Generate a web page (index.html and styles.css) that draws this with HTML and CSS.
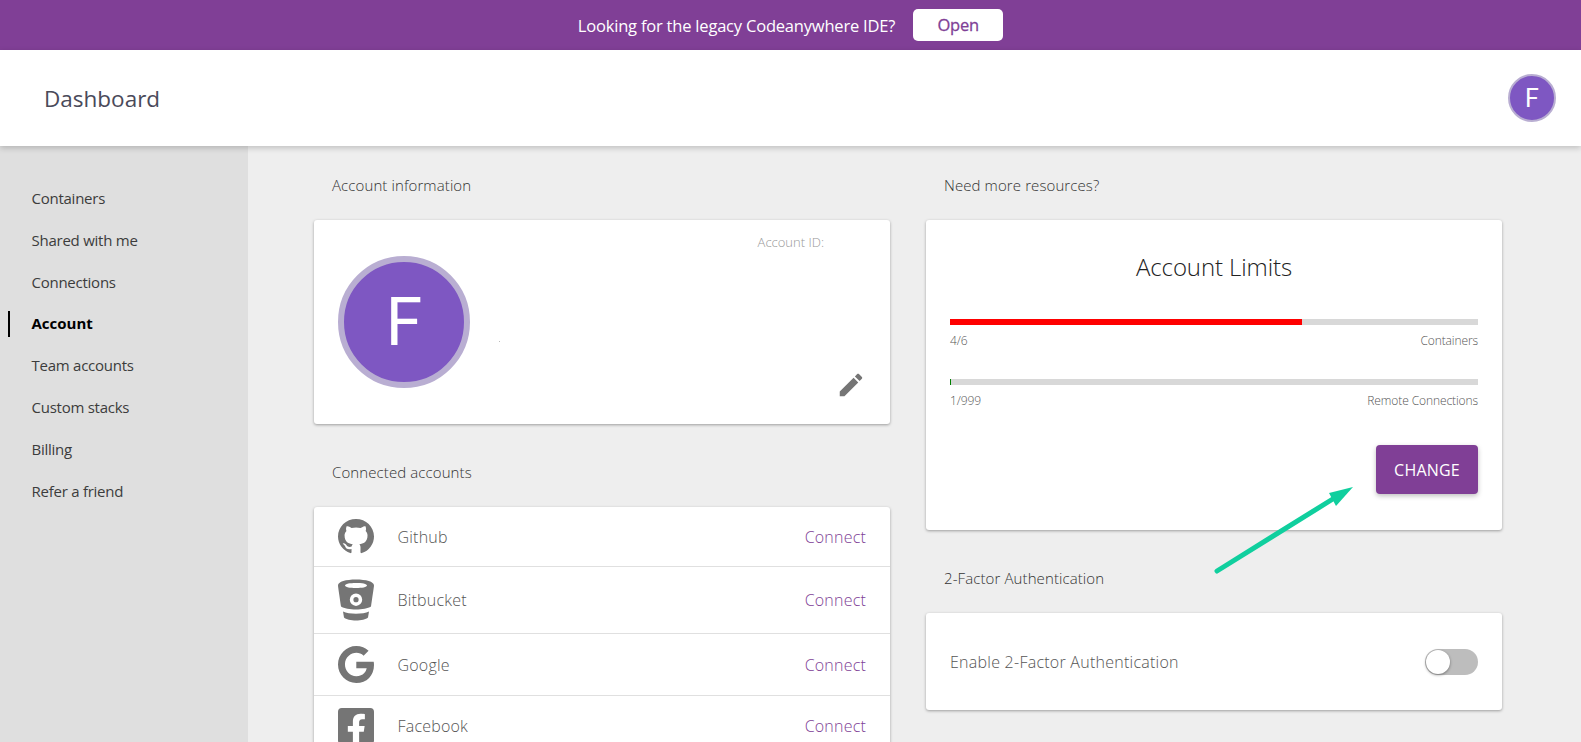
FILE: index.html
```html
<!DOCTYPE html>
<html lang="en">
<head>
<meta charset="UTF-8">
<meta name="viewport" content="width=device-width, initial-scale=1.0">
<title>Dashboard</title>
<link rel="stylesheet" href="styles.css">
</head>
<body>
<div class="banner">
  <span>Looking for the legacy Codeanywhere IDE?</span>
  <a class="banner-btn" href="#">Open</a>
</div>
<header class="topbar">
  <div class="page-title">Dashboard</div>
  <div class="avatar-small">F</div>
</header>
<div class="layout">
  <nav class="sidebar">
    <a href="#">Containers</a>
    <a href="#">Shared with me</a>
    <a href="#">Connections</a>
    <a href="#" class="active">Account</a>
    <a href="#">Team accounts</a>
    <a href="#">Custom stacks</a>
    <a href="#">Billing</a>
    <a href="#">Refer a friend</a>
  </nav>
  <main class="content">
    <div class="column">
      <section class="section">
        <h2 class="section-label">Account information</h2>
        <div class="card account-card">
          <div class="avatar-big">F</div>
          <div class="account-dot"></div>
          <div class="account-id">Account ID:</div>
          <svg class="edit-icon" viewBox="0 0 24 24"><path d="M3 17.25V21h3.75L17.81 9.94l-3.75-3.75L3 17.25zM20.71 7.04c.39-.39.39-1.02 0-1.41l-2.34-2.34c-.39-.39-1.02-.39-1.41 0l-1.83 1.83 3.75 3.75 1.83-1.83z"/></svg>
        </div>
      </section>
      <section class="section">
        <h2 class="section-label">Connected accounts</h2>
        <div class="card">
          <div class="conn-row">
            <svg class="conn-icon gh" viewBox="0 0 16 16" preserveAspectRatio="none"><path d="M8 0C3.58 0 0 3.58 0 8c0 3.54 2.29 6.53 5.47 7.59.4.07.55-.17.55-.38 0-.19-.01-.82-.01-1.49-2.01.37-2.53-.49-2.69-.94-.09-.23-.48-.94-.82-1.13-.28-.15-.68-.52-.01-.53.63-.01 1.08.58 1.23.82.72 1.21 1.87.87 2.33.66.07-.52.28-.87.51-1.07-1.78-.2-3.64-.89-3.64-3.95 0-.87.31-1.59.82-2.15-.08-.2-.36-1.02.08-2.12 0 0 .67-.21 2.2.82.64-.18 1.32-.27 2-.27.68 0 1.36.09 2 .27 1.53-1.04 2.2-.82 2.2-.82.44 1.1.16 1.92.08 2.12.51.56.82 1.27.82 2.15 0 3.07-1.87 3.75-3.65 3.95.29.25.54.73.54 1.48 0 1.07-.01 1.93-.01 2.2 0 .21.15.46.55.38A8.013 8.013 0 0016 8c0-4.42-3.58-8-8-8z"/></svg>
            <span class="conn-name">Github</span>
            <a class="conn-link" href="#">Connect</a>
          </div>
          <div class="conn-row">
            <svg class="conn-icon bb" viewBox="0 0 36 41"><path fill-rule="evenodd" d="M18 0C8 0 0 2 0 6c0 1 2 14 3 21 3 2 9 3 15 3s12-1 15-3c1-7 3-20 3-21 0-4-8-6-18-6zm0 3.5c6 0 11 .8 11 2.500S24 8.500 18 8.500 7 7.700 7 6s5-2.500 11-2.500zM18 14a6.200 6.200 0 1 0 0 12.400A6.200 6.200 0 0 0 18 14z"/><circle cx="18" cy="20.200" r="2.600"/><path d="M5 32c3 1.500 8 2.200 13 2.200s10-.7 13-2.200l-1 6c-2 2-7 3-12 3s-10-1-12-3z"/></svg>
            <span class="conn-name">Bitbucket</span>
            <a class="conn-link" href="#">Connect</a>
          </div>
          <div class="conn-row">
            <svg class="conn-icon gg" viewBox="0 8 488 496" preserveAspectRatio="none"><path d="M488 261.800C488 403.300 391.100 504 248 504 110.800 504 0 393.200 0 256S110.800 8 248 8c66.800 0 123 24.500 166.300 64.900l-67.500 64.900C258.500 52.600 94.300 116.600 94.300 256c0 86.500 69.100 156.600 153.700 156.600 98.200 0 135-70.400 140.800-106.900H248v-85.300h236.100c2.300 12.700 3.900 24.900 3.900 41.400z"/></svg>
            <span class="conn-name">Google</span>
            <a class="conn-link" href="#">Connect</a>
          </div>
          <div class="conn-row">
            <svg class="conn-icon fb" viewBox="0 32 448 448" preserveAspectRatio="none"><path d="M400 32H48A48 48 0 0 0 0 80v352a48 48 0 0 0 48 48h137.250V327.690h-63V256h63v-54.640c0-62.150 37-96.480 93.670-96.480 27.140 0 55.520 4.840 55.520 4.840v61h-31.270c-30.810 0-40.420 19.120-40.420 38.730V256h68.780l-11 71.690h-57.780V480H400a48 48 0 0 0 48-48V80a48 48 0 0 0-48-48z"/></svg>
            <span class="conn-name">Facebook</span>
            <a class="conn-link" href="#">Connect</a>
          </div>
        </div>
      </section>
    </div>
    <div class="column">
      <section class="section">
        <h2 class="section-label">Need more resources?</h2>
        <div class="card limits-card">
          <h3 class="limits-title">Account Limits</h3>
          <div class="limit">
            <div class="limit-track"><div class="limit-fill red" style="width: 66.67%"></div></div>
            <div class="limit-info"><span>4/6</span><span>Containers</span></div>
          </div>
          <div class="limit">
            <div class="limit-track"><div class="limit-fill green" style="width: 0.2%"></div></div>
            <div class="limit-info"><span>1/999</span><span>Remote Connections</span></div>
          </div>
          <div class="limits-actions"><a class="change-btn" href="#">CHANGE</a></div>
        </div>
      </section>
      <section class="section">
        <h2 class="section-label">2-Factor Authentication</h2>
        <div class="card tfa-card">
          <span class="tfa-text">Enable 2-Factor Authentication</span>
          <div class="switch"><div class="switch-knob"></div></div>
        </div>
      </section>
    </div>
  </main>
</div>
<!-- annotation arrow over the page -->
<svg class="arrow" viewBox="0 0 1581 742"><line x1="1217" y1="571" x2="1336" y2="497"/><polygon points="1353,487 1329,493 1336,506"/></svg>
</body>
</html>
```

FILE: styles.css
```css
* {
  box-sizing: border-box;
}
html, body {
  height: 100%;
}
body {
  margin: 0;
  overflow: hidden;
  font-family: "Open Sans", sans-serif;
  font-weight: 300;
  color: #444;
  background-color: #eeeeee;
  display: flex;
  flex-direction: column;
}
a {
  text-decoration: none;
  color: inherit;
}
.banner {
  height: 50px;
  flex-shrink: 0;
  background-color: #803f96;
  color: #fff;
  display: flex;
  align-items: center;
  justify-content: center;
  gap: 18px;
  font-size: 16.500px;
  font-weight: 400;
  letter-spacing: -0.2px;
}
.banner-btn {
  width: 90px;
  height: 32px;
  line-height: 32px;
  text-align: center;
  background-color: #fff;
  border-radius: 5px;
  color: #803f96;
  -webkit-text-stroke: 0.3px #803f96;
}
.topbar {
  height: 96px;
  flex-shrink: 0;
  background-color: #fff;
  display: flex;
  align-items: center;
  justify-content: space-between;
  padding: 0 25px 0 44px;
  box-shadow: 0 2px 6px rgba(0, 0, 0, 0.2);
  position: relative;
  z-index: 2;
}
.page-title {
  font-size: 22.500px;
  line-height: 32px;
  padding-top: 2px;
  color: #4a4a5a;
  font-weight: 400;
}
.avatar-small {
  width: 48px;
  height: 48px;
  border-radius: 50%;
  background-color: #7e57c2;
  border: 2px solid #b9aed2;
  color: #fff;
  font-family: Roboto, sans-serif;
  font-size: 25px;
  display: flex;
  align-items: center;
  justify-content: center;
  font-weight: 400;
}
.layout {
  flex: 1;
  display: flex;
  min-height: 0;
}
.sidebar {
  width: 248px;
  flex-shrink: 0;
  background-color: #dfdfdf;
  padding-top: 32px;
  display: flex;
  flex-direction: column;
}
.sidebar a {
  height: 41.800px;
  line-height: 41.800px;
  padding-left: 31.500px;
  font-size: 15px;
  font-weight: 400;
  letter-spacing: -0.25px;
  color: #3c3c3c;
  position: relative;
}
.sidebar a.active {
  font-weight: 700;
  letter-spacing: 0;
  color: #000;
}
.sidebar a.active::before {
  content: "";
  position: absolute;
  left: 8px;
  top: 8px;
  bottom: 8px;
  width: 2px;
  background-color: #000;
}
.content {
  flex: 1;
  display: flex;
  gap: 36px;
  padding: 29px 0 0 66px;
}
.column {
  width: 576px;
}
.section {
  margin-bottom: 38px;
}
.section-label {
  margin: 0 0 25px 18px;
  font-size: 15px;
  line-height: 20px;
  font-weight: 300;
  letter-spacing: 0.1px;
  color: #333;
}
.card {
  background-color: #fff;
  border-radius: 3px;
  box-shadow: 0 1px 3px rgba(0, 0, 0, 0.35);
}
.account-card {
  height: 204px;
  position: relative;
  padding: 36px 24px;
}
.avatar-big {
  width: 132px;
  height: 132px;
  border-radius: 50%;
  background-color: #7e57c2;
  border: 6px solid #b9aed2;
  color: #fff;
  font-family: Roboto, sans-serif;
  font-size: 66px;
  font-weight: 400;
  display: flex;
  align-items: center;
  justify-content: center;
}
.account-dot {
  position: absolute;
  left: 185px;
  top: 121px;
  width: 1px;
  height: 1px;
  background-color: #bbb;
}
.account-id {
  position: absolute;
  right: 66px;
  top: 13px;
  font-size: 13px;
  color: #999;
}
.edit-icon {
  position: absolute;
  right: 24px;
  bottom: 24px;
  width: 30px;
  height: 30px;
  fill: #757575;
}
.conn-row {
  display: flex;
  align-items: center;
  padding: 12px 24px;
  border-bottom: 1px solid #e0e0e0;
  font-size: 16px;
  letter-spacing: 0.2px;
}
.conn-icon {
  width: 36px;
  fill: #757575;
  flex-shrink: 0;
}
.conn-icon.gh {
  height: 35px;
}
.conn-icon.bb {
  height: 42px;
}
.conn-icon.gg {
  height: 37px;
}
.conn-icon.fb {
  height: 36px;
}
.conn-name {
  margin-left: 23.500px;
  flex: 1;
  color: #555;
}
.conn-link {
  color: #803f96;
}
.limits-card {
  height: 310px;
  padding: 31px 24px 0;
}
.limits-title {
  margin: 0 0 36px;
  text-align: center;
  font-size: 24px;
  line-height: 32px;
  font-weight: 300;
  letter-spacing: -0.1px;
  color: #222;
}
.limit {
  margin-bottom: 30px;
}
.limit-track {
  height: 6px;
  background-color: #d8d8d8;
}
.limit-fill {
  height: 6px;
}
.limit-fill.red {
  background-color: #ff0000;
}
.limit-fill.green {
  background-color: #008000;
}
.limit-info {
  display: flex;
  justify-content: space-between;
  margin-top: 8px;
  font-size: 12px;
  line-height: 16px;
  letter-spacing: -0.1px;
  color: #555;
}
.limits-actions {
  display: flex;
  justify-content: flex-end;
  margin-top: 36px;
}
.change-btn {
  width: 102px;
  height: 49px;
  line-height: 50px;
  text-align: center;
  background-color: #803f96;
  color: #fff;
  border-radius: 4px;
  font-size: 16px;
  font-weight: 400;
  letter-spacing: 0.2px;
  box-shadow: 0 2px 5px rgba(0, 0, 0, 0.25);
}
.tfa-card {
  height: 97px;
  display: flex;
  align-items: center;
  justify-content: space-between;
  padding: 0 24px;
  font-size: 16px;
  letter-spacing: 0.25px;
  color: #555;
}
.switch {
  width: 53px;
  height: 26px;
  border-radius: 13px;
  background-color: #bdbdbd;
  padding: 1px;
}
.switch-knob {
  width: 24px;
  height: 24px;
  border-radius: 50%;
  background-color: #fff;
  box-shadow: 0 1px 3px rgba(0, 0, 0, 0.4);
}
.arrow {
  position: absolute;
  left: 0;
  top: 0;
  width: 1581px;
  height: 742px;
  z-index: 5;
  pointer-events: none;
}
.arrow line {
  stroke: #10cf9e;
  stroke-width: 5;
  stroke-linecap: round;
}
.arrow polygon {
  fill: #10cf9e;
}
```
